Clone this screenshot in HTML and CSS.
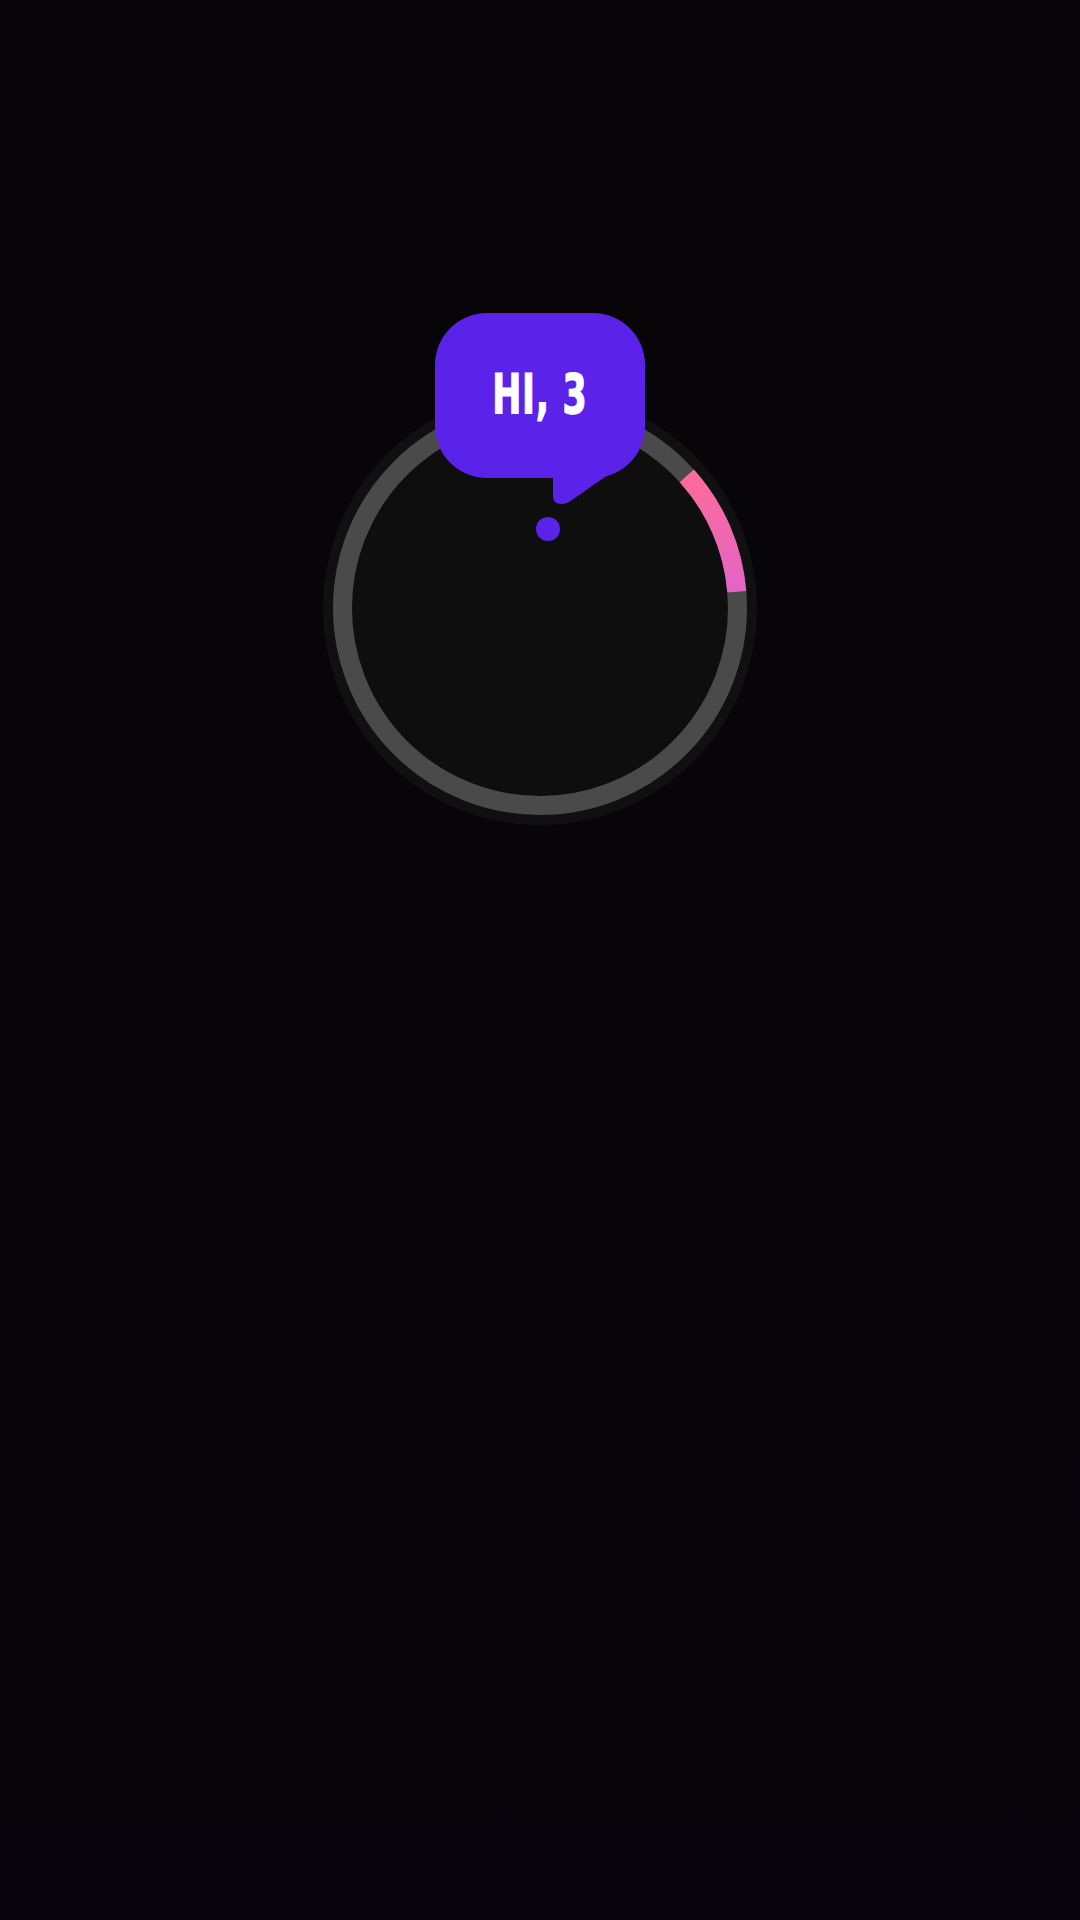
FILE: index.html
```html
<!DOCTYPE html>
<html lang="en">
<head>
    <meta charset="UTF-8">
    <meta name="viewport" content="width=device-width, initial-scale=1.0">
    <title>Hi</title>
    <link rel="stylesheet" href="styles.css">
</head>
<body>
    <div class="screen">
        <!-- Dial con el anillo de progreso -->
        <div class="dial">
            <svg class="ring" viewBox="0 0 440 440" width="440" height="440">
                <defs>
                    <linearGradient id="pinkArc" x1="0" y1="0" x2="0" y2="1">
                        <stop offset="0" stop-color="#ff6b9c"/>
                        <stop offset="1" stop-color="#e264c6"/>
                    </linearGradient>
                </defs>
                <circle cx="220" cy="220" r="217" fill="#101011"/>
                <circle cx="220" cy="220" r="197.5" fill="#0e0e0e" stroke="#4a4a4a" stroke-width="19"/>
                <path d="M366.8 87.8 A197.5 197.5 0 0 1 416.8 203.8" fill="none" stroke="url(#pinkArc)" stroke-width="19"/>
            </svg>

            <!-- Globo de texto -->
            <div class="bubble">
                <span class="bubble-text">HI, 3</span>
                <svg class="bubble-tail" viewBox="0 0 210 200" width="210" height="200">
                    <path d="M118 140 V183 Q118 192 128 191 Q133 190 137 187 L200 143 L190 140 Z" fill="#5b22ea"/>
                </svg>
            </div>

            <div class="dot"></div>
        </div>
    </div>
</body>
</html>
```

FILE: styles.css
```css
/* Pantalla principal */
body {
    margin: 0;
    background-color: #08050a;
}

.screen {
    display: flex;
    flex-direction: column;
    align-items: center;
    height: 1920px;
    background-image: linear-gradient(to bottom, #070508 0%, #0a050c 100%);
}

.dial {
    position: relative;
    width: 440px;
    height: 440px;
    margin-top: 388px;
}

.ring {
    display: block;
}

.bubble {
    position: absolute;
    left: 115px;
    top: -75px;
    width: 210px;
    height: 165px;
    border-radius: 52px;
    background-color: #5b22ea;
    display: flex;
    justify-content: center;
    align-items: flex-start;
    padding-top: 53px;
    box-sizing: border-box;
}

.bubble-text {
    position: relative;
    z-index: 1;
    font-family: "DejaVu Sans Condensed", "DejaVu Sans", sans-serif;
    font-weight: 700;
    font-size: 56px;
    line-height: 56px;
    color: #fff;
    -webkit-text-stroke: 1.2px #fff;
    letter-spacing: 1px;
    transform: scaleX(0.69);
}

.bubble-tail {
    position: absolute;
    left: 0;
    top: 0;
}

.dot {
    position: absolute;
    left: 216px;
    top: 129px;
    width: 24px;
    height: 24px;
    border-radius: 50%;
    background-color: #5b22ea;
}
```
